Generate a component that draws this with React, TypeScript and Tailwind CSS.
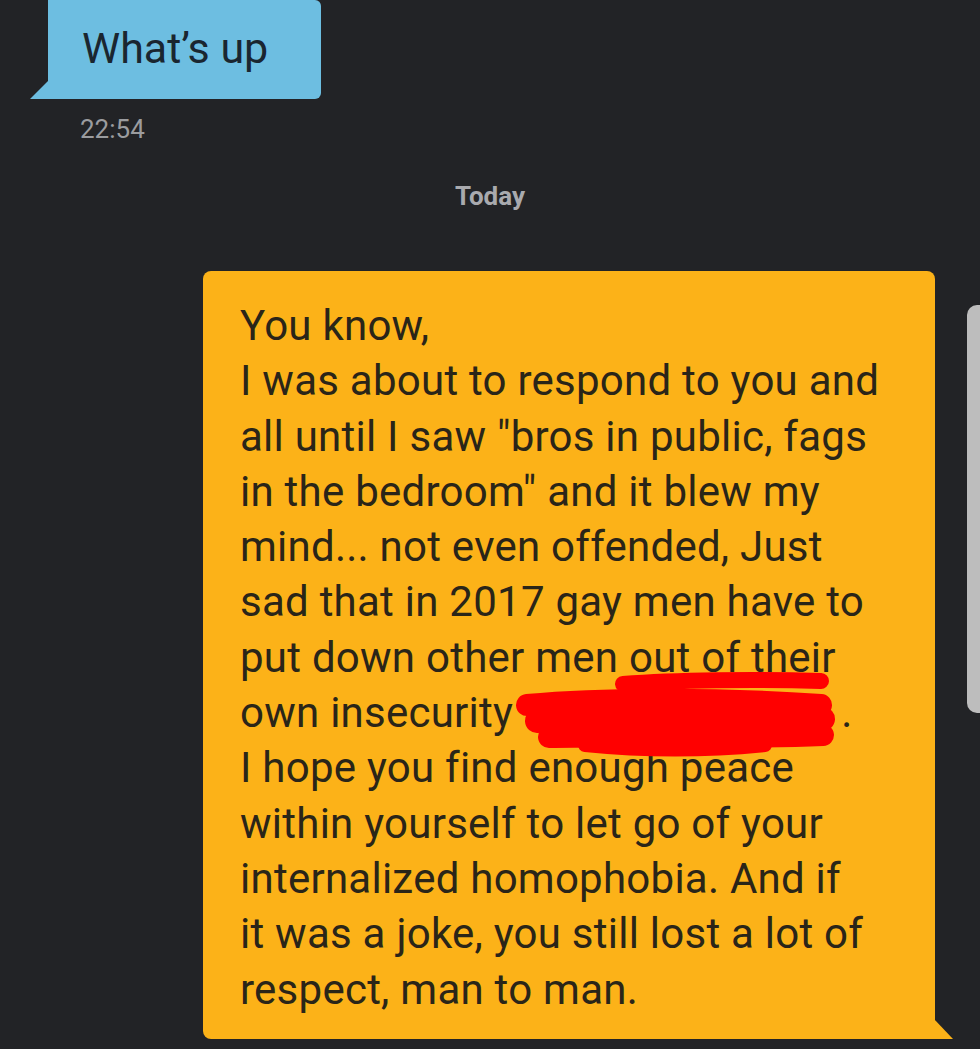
const lines = [
  'You know,',
  'I was about to respond to you and',
  'all until I saw "bros in public, fags',
  'in the bedroom" and it blew my',
  'mind... not even offended, Just',
  'sad that in 2017 gay men have to',
  'put down other men out of their',
  null,
  'I hope you find enough peace',
  'within yourself to let go of your',
  'internalized homophobia. And if',
  'it was a joke, you still lost a lot of',
  'respect, man to man.',
];

function Scribble() {
  return (
    <svg
      className="absolute left-[505px] top-[665px] pointer-events-none"
      width="340"
      height="95"
      viewBox="0 0 340 95"
    >
      <g stroke="#ff0000" strokeLinecap="round" strokeLinejoin="round" fill="none">
        <path d="M118 19 C170 15 250 14 316 16" strokeWidth="16" />
        <path d="M22 40 C90 34 200 32 316 40" strokeWidth="22" />
        <path d="M32 56 C120 50 230 48 318 54" strokeWidth="24" />
        <path d="M44 72 C120 70 220 74 318 70" strokeWidth="22" />
        <path d="M80 80 C140 86 200 86 260 80" strokeWidth="14" />
      </g>
    </svg>
  );
}

export default function App() {
  return (
    <div className="relative h-[1049px] w-[980px] overflow-hidden bg-[#222326] font-['Roboto',sans-serif]">
      <div className="flex flex-col">
        {/* incoming */}
        <div className="relative ml-[48px] flex h-[99px] w-[273px] items-center rounded-br-[6px] rounded-tr-[6px] bg-[#6dbee1] pl-[34px] pb-[2px]">
          <span className="text-[43px] leading-none text-[#1a2630]">What’s up</span>
          <svg className="absolute -left-[18px] bottom-0" width="19" height="19" viewBox="0 0 19 19">
            <path d="M0 19 L19 0 L19 19 Z" fill="#6dbee1" />
          </svg>
        </div>
        <div className="ml-[80px] mt-[17px] text-[26px] leading-none text-[#9b9c9f]">22:54</div>

        <div className="mt-[41px] text-center text-[26px] font-bold leading-none text-[#a9aaae]">Today</div>

        {/* outgoing */}
        <div className="relative ml-[203px] mt-[62px] h-[768px] w-[732px] rounded-t-[8px] rounded-bl-[8px] bg-[#fcb218] pl-[37px] pt-[27px]">
          <div className="text-[42px] leading-[55.3px] tracking-[0.25px] text-[#2a2518]">
            {lines.map((l, i) =>
              l === null ? (
                <div key={i} className="whitespace-nowrap">
                  own insecurity<span className="inline-block w-[328px]" />.
                </div>
              ) : (
                <div key={i} className="whitespace-nowrap">
                  {l}
                </div>
              ),
            )}
          </div>
          <svg className="absolute -right-[18px] bottom-0" width="19" height="20" viewBox="0 0 19 20">
            <path d="M0 0 L19 20 L0 20 Z" fill="#fcb218" />
          </svg>
        </div>
      </div>

      <Scribble />

      {/* scrollbar */}
      <div className="absolute left-[967px] top-[305px] h-[408px] w-[24px] rounded-[10px] bg-[#bdbdbd]" />
    </div>
  );
}
